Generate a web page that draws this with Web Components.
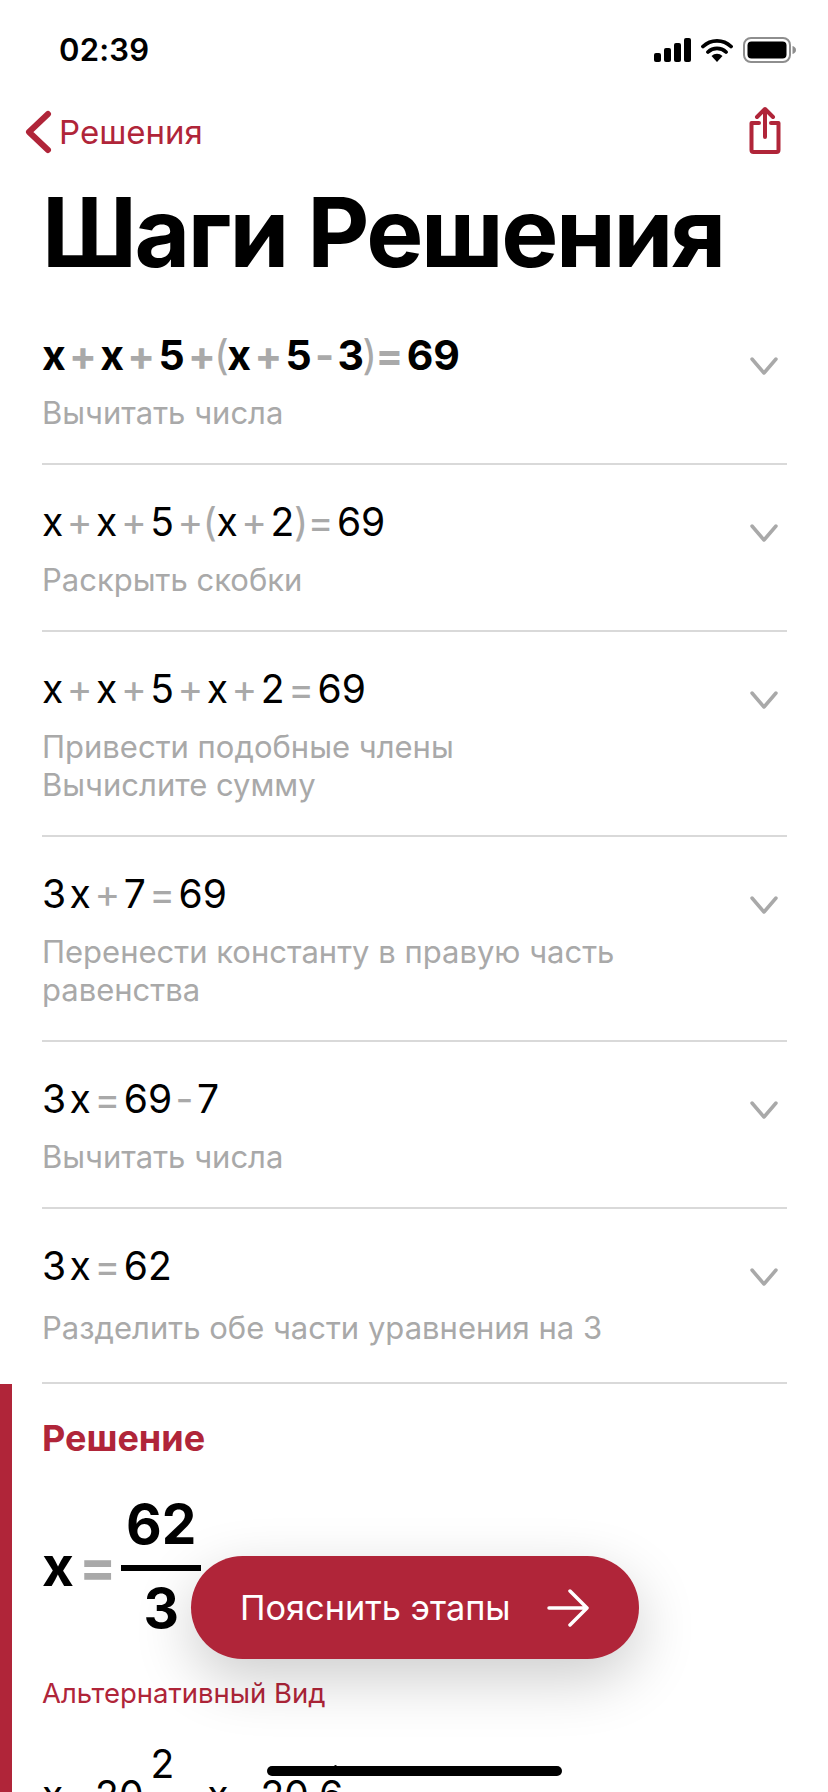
<!DOCTYPE html>
<html lang="ru">
<head>
<meta charset="utf-8">
<title>Шаги Решения</title>
<style>
  html, body { margin: 0; background: #fff; }
  body { font-family: Inter, "Liberation Sans", sans-serif; color: #000; overflow: hidden; }
</style>
</head>
<body>
<app-screen>
  <status-bar slot="top" time="02:39"></status-bar>
  <nav-bar slot="top" back="Решения"></nav-bar>
  <large-title slot="top">Шаги Решения</large-title>

  <step-row first>
    <math-eq slot="eq" bold expr="x + x + 5 + ( x + 5 - 3 ) = 69"></math-eq>
    Вычитать числа
  </step-row>
  <step-row>
    <math-eq slot="eq" expr="x + x + 5 + ( x + 2 ) = 69"></math-eq>
    Раскрыть скобки
  </step-row>
  <step-row>
    <math-eq slot="eq" expr="x + x + 5 + x + 2 = 69"></math-eq>
    Привести подобные члены<br>Вычислите сумму
  </step-row>
  <step-row>
    <math-eq slot="eq" expr="3 x + 7 = 69"></math-eq>
    Перенести константу в правую часть<br>равенства
  </step-row>
  <step-row>
    <math-eq slot="eq" expr="3 x = 69 - 7"></math-eq>
    Вычитать числа
  </step-row>
  <step-row loose>
    <math-eq slot="eq" expr="3 x = 62"></math-eq>
    Разделить обе части уравнения на 3
  </step-row>

  <solution-block></solution-block>

  <float-button slot="over">Пояснить этапы</float-button>
  <home-bar slot="over"></home-bar>
</app-screen>

<script>
const RED = "#b02539";

class AppScreen extends HTMLElement {
  constructor() {
    super();
    this.attachShadow({ mode: "open" }).innerHTML = `
      <style>
        :host { display: flex; flex-flow: column; position: relative; width: 828px; height: 1792px; overflow: hidden; background: #fff; }
        ::slotted(*) { flex: none; }
      </style>
      <slot name="top"></slot>
      <slot></slot>
      <slot name="over"></slot>`;
  }
}

class StatusBar extends HTMLElement {
  constructor() {
    super();
    this.attachShadow({ mode: "open" }).innerHTML = `
      <style>
        :host { display: flex; justify-content: space-between; align-items: center; height: 100px; padding: 0 32px 0 59px; box-sizing: border-box; }
        .time { font: 600 31px/40px Inter, sans-serif; letter-spacing: .2px; }
        .icons { display: flex; align-items: center; gap: 10px; }
        svg { display: block; }
      </style>
      <span class="time">${this.getAttribute("time")}</span>
      <div class="icons">
        <svg width="37" height="24" viewBox="0 0 37 24"><rect x="0" y="15" width="7" height="9" rx="2"/><rect x="10" y="10" width="7" height="14" rx="2"/><rect x="20" y="5" width="7" height="19" rx="2"/><rect x="30" y="0" width="7" height="24" rx="2"/></svg>
        <svg width="32" height="24" viewBox="0 0 32 24"><path d="M16 24l-5.500-6a8 8 0 0 1 11 0z"/><path d="M2 8.500a20 20 0 0 1 28 0M7 14a13 13 0 0 1 18 0" fill="none" stroke="#000" stroke-width="3.800" stroke-linecap="round"/></svg>
        <svg width="53" height="26" viewBox="0 0 53 26"><rect x="1" y="1" width="46" height="24" rx="7" fill="none" stroke="#8e8e8e" stroke-width="2"/><rect x="4.500" y="4.500" width="39" height="17" rx="4"/><path d="M49.500 9c2 .5 3.500 2 3.500 4s-1.500 3.500-3.500 4z" fill="#8e8e8e"/></svg>
      </div>`;
  }
}

class NavBar extends HTMLElement {
  constructor() {
    super();
    this.attachShadow({ mode: "open" }).innerHTML = `
      <style>
        :host { display: flex; justify-content: space-between; align-items: center; height: 60px; padding: 0 46px 0 24px; color: ${RED}; }
        .back { display: flex; align-items: center; gap: 7px; margin-top: 4px; font: 400 33px/40px Inter, sans-serif; }
        svg { display: block; }
      </style>
      <div class="back">
        <svg width="28" height="44" viewBox="0 0 28 44"><path d="M24 4L5 22l19 18" fill="none" stroke="${RED}" stroke-width="6" stroke-linecap="round" stroke-linejoin="round"/></svg>
        <span>${this.getAttribute("back")}</span>
      </div>
      <svg width="34" height="48" viewBox="0 0 34 48"><path d="M11 17H3.500v27a2 2 0 0 0 2 2h23a2 2 0 0 0 2-2V17H23" fill="none" stroke="${RED}" stroke-width="4" stroke-linecap="round" stroke-linejoin="round"/><path d="M17 31V3M9 11l8-8 8 8" fill="none" stroke="${RED}" stroke-width="4" stroke-linecap="round" stroke-linejoin="round"/></svg>`;
  }
}

class LargeTitle extends HTMLElement {
  constructor() {
    super();
    this.attachShadow({ mode: "open" }).innerHTML = `
      <style>
        :host { display: block; padding: 18px 0 16px 42px; font: 700 96px/108px Inter, sans-serif; letter-spacing: -2.400px; white-space: nowrap; }
      </style>
      <slot></slot>`;
  }
}

class MathEq extends HTMLElement {
  constructor() {
    super();
    const ops = ["+", "-", "=", "(", ")"];
    const tokens = this.getAttribute("expr").split(" ").map((t) => {
      const cls = ops.includes(t) ? (t === "(" || t === ")" ? "op par" : "op") : "";
      return `<span class="${cls}">${t}</span>`;
    });
    this.attachShadow({ mode: "open" }).innerHTML = `
      <style>
        :host { display: flex; align-items: center; gap: 3.500px; height: 52px; font: 400 39px/52px Inter, sans-serif; color: #000; }
        :host([bold]) { font-weight: 700; font-size: 41px; gap: 3.300px; }
        .op { color: #a9a9a9; }
        .par { font-weight: 400; margin: 0 -4px; }
        :host([bold]) .par { margin: 0 -5px; }
      </style>
      ${tokens.join("")}`;
  }
}

class StepRow extends HTMLElement {
  constructor() {
    super();
    this.attachShadow({ mode: "open" }).innerHTML = `
      <style>
        :host { display: flex; margin: 0 41px 0 42px; padding: 31px 0 31px; border-bottom: 2px solid #d9d9d9; justify-content: space-between; box-sizing: border-box; }
        :host([first]) { padding-top: 27px; }
        :host([loose]) { padding-bottom: 35px; }
        :host([loose]) .desc { margin-top: 17px; }
        .desc { margin-top: 13px; font: 400 31px/38px Inter, sans-serif; color: #a9a9a9; }
        svg { display: block; flex: none; margin: 28px 9px 0 0; }
      </style>
      <div>
        <slot name="eq"></slot>
        <div class="desc"><slot></slot></div>
      </div>
      <svg width="28" height="18" viewBox="0 0 28 18"><path d="M2 2l12 14L26 2" fill="none" stroke="#a9a9a9" stroke-width="3.500" stroke-linecap="round" stroke-linejoin="round"/></svg>`;
  }
}

class SolutionBlock extends HTMLElement {
  constructor() {
    super();
    this.attachShadow({ mode: "open" }).innerHTML = `
      <style>
        :host { display: block; padding: 33px 0 0 30px; border-left: 12px solid ${RED}; }
        h2 { margin: 0; font: 700 36px/42px Inter, sans-serif; color: ${RED}; }
        .big { display: flex; align-items: center; gap: 5px; margin-top: 30px; font: 700 55px/70px Inter, sans-serif; }
        .big .op { color: #a9a9a9; }
        .frac { display: inline-flex; flex-flow: column; align-items: center; width: 80px; }
        .frac .n { border-bottom: 6px solid #000; align-self: stretch; text-align: center; padding-bottom: 6px; }
        .frac .d { padding-top: 2px; }
        h3 { margin: 32px 0 0; font: 400 27.500px/36px Inter, sans-serif; color: ${RED}; }
        .alt { display: flex; align-items: baseline; gap: 3px; margin-top: 58px; font: 400 39px/52px Inter, sans-serif; }
        .alt .op { color: #a9a9a9; }
        .sfrac { font-size: 39px; margin: 0 30px 0 4px; position: relative; top: -31px; }
        .rep { position: relative; }
        .rep::before { content: ""; position: absolute; left: 15px; top: -6px; width: 3px; height: 5px; border-radius: 2px; background: #000; }
      </style>
      <h2>Решение</h2>
      <div class="big">
        <span>x</span><span class="op">=</span>
        <span class="frac"><span class="n">62</span><span class="d">3</span></span>
      </div>
      <h3>Альтернативный Вид</h3>
      <div class="alt">
        <span>x</span><span class="op">=</span><span>20</span><span class="sfrac">2</span>
        <span>x</span><span class="op">=</span><span>20.<span class="rep">6</span></span>
      </div>`;
  }
}

class FloatButton extends HTMLElement {
  constructor() {
    super();
    this.attachShadow({ mode: "open" }).innerHTML = `
      <style>
        :host { position: absolute; left: 191px; top: 1556px; width: 448px; height: 103px; box-sizing: border-box; padding: 0 50px 0 49px; display: flex; align-items: center; justify-content: space-between; border-radius: 52px; background: ${RED}; color: #fff; font: 400 34.300px/40px Inter, sans-serif; box-shadow: 0 20px 60px rgba(0,0,0,.2); }
        svg { display: block; }
      </style>
      <slot></slot>
      <svg width="42" height="38" viewBox="0 0 42 38"><path d="M2 19h37M23 2l17 17-17 17" fill="none" stroke="#fff" stroke-width="3.500" stroke-linecap="round" stroke-linejoin="round"/></svg>`;
  }
}

class HomeBar extends HTMLElement {
  constructor() {
    super();
    this.attachShadow({ mode: "open" }).innerHTML = `
      <style>
        :host { position: absolute; left: 267px; top: 1766px; width: 295px; height: 10px; border-radius: 5px; background: #000; }
      </style>`;
  }
}

customElements.define("app-screen", AppScreen);
customElements.define("status-bar", StatusBar);
customElements.define("nav-bar", NavBar);
customElements.define("large-title", LargeTitle);
customElements.define("math-eq", MathEq);
customElements.define("step-row", StepRow);
customElements.define("solution-block", SolutionBlock);
customElements.define("float-button", FloatButton);
customElements.define("home-bar", HomeBar);
</script>
</body>
</html>
